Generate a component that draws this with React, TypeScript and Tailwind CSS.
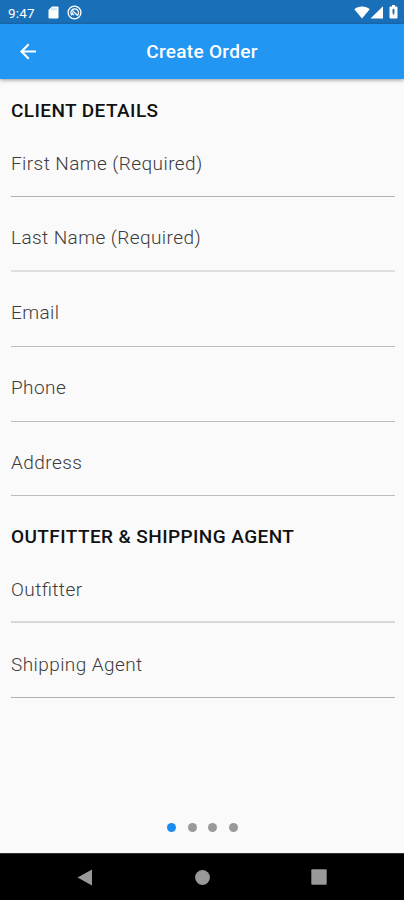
import clsx from "clsx";

interface Field {
  label: string;
  box: string;
  line: string;
}

const clientFields: Field[] = [
  { label: "First Name (Required)", box: "h-[75px] pt-[30px]", line: "border-b border-[#b2b2b2]" },
  { label: "Last Name (Required)", box: "h-[75px] pt-[29px]", line: "border-b-2 border-[#dfdfdf]" },
  { label: "Email", box: "h-[75px] pt-[29px]", line: "border-b border-[#bdbdbd]" },
  { label: "Phone", box: "h-[75px] pt-[29px]", line: "border-b border-[#bdbdbd]" },
  { label: "Address", box: "h-[74px] pt-[29px]", line: "border-b border-[#bdbdbd]" },
];

const agentFields: Field[] = [
  { label: "Outfitter", box: "h-[75px] pt-[30px]", line: "border-b-2 border-[#d8d8d8]" },
  { label: "Shipping Agent", box: "h-[75px] pt-[30px]", line: "border-b border-[#b2b2b2]" },
];

function StatusBar() {
  return (
    <div className="flex h-6 items-center justify-between bg-[#1a70b8] pr-[6px] pl-2 text-white">
      <div className="flex items-center pt-px">
        <span className="w-[40px] text-[13.5px] leading-[22px] tracking-[0.2px]">9:47</span>
        <svg width="11" height="13" viewBox="0 0 11 13" fill="currentColor">
          <path d="M4 0.5h5.5a1 1 0 0 1 1 1v10a1 1 0 0 1-1 1h-8a1 1 0 0 1-1-1V4z" />
          <path d="M4 2.2v2M6 2.2v2M8 2.2v2" stroke="#8dbbe0" strokeWidth="0.8" />
        </svg>
        <svg className="ml-2" width="15" height="15" viewBox="0 0 15 15" fill="none" stroke="currentColor">
          <circle cx="7.5" cy="7.5" r="6.4" strokeWidth="1.3" />
          <path d="M5 10.4a3.8 3.8 0 1 1 5.4 0M5.6 5.6l5.2 5.2M7.2 9.8a2 2 0 0 1-1.8-2.6" strokeWidth="1.3" />
        </svg>
      </div>
      <div className="flex items-center">
        <svg width="16" height="13" viewBox="0 0 16 13" fill="currentColor">
          <path d="M8 12.6L0.3 3.2C2.4 1.4 5 0.5 8 0.5s5.6.9 7.7 2.7z" />
        </svg>
        <svg width="14" height="13" viewBox="0 0 14 13" fill="currentColor">
          <path d="M13 0.3v12.2H0.5z" />
        </svg>
        <svg className="ml-[5px]" width="9" height="14" viewBox="0 0 9 14">
          <path d="M3 0h3v1.4h1.5a1 1 0 0 1 1 1v10.2a1 1 0 0 1-1 1h-6a1 1 0 0 1-1-1V2.4a1 1 0 0 1 1-1H3z" fill="currentColor" />
          <path d="M3.8 4.2h1.4v3.6l-0.7 2-0.7-2z" fill="#1a70b8" stroke="#1a70b8" strokeWidth="0.5" />
        </svg>
      </div>
    </div>
  );
}

function Header() {
  return (
    <header className="relative z-10 grid h-[55px] grid-cols-[1fr_auto_1fr] items-center bg-[#2196f3] pl-5 text-white shadow-[0_1px_4px_rgba(0,0,0,0.4)]">
      <svg width="17" height="17" viewBox="0 0 17 17" fill="none" stroke="currentColor" strokeWidth="2.2">
        <path d="M16 8.5H2M8.7 1.3L1.5 8.5l7.2 7.2" />
      </svg>
      <h1 className="-ml-5 pt-px text-[19px] leading-6 font-medium tracking-[0.3px]">Create Order</h1>
      <span />
    </header>
  );
}

function Section({ title, fields }: { title: string; fields: Field[] }) {
  return (
    <section>
      <h2 className="h-[23px] text-[19px] leading-6 font-medium tracking-[0.42px] whitespace-nowrap text-[#111]">{title}</h2>
      {fields.map((field) => (
        <div key={field.label} className={clsx(field.box, field.line)}>
          <div className="text-[19px] leading-6 font-light tracking-[0.42px] text-[#3c3c3c] [font-feature-settings:'liga']">
            {field.label}
          </div>
        </div>
      ))}
    </section>
  );
}

function Pager() {
  return (
    <div className="flex h-[9px] justify-center gap-[11.6px] pr-px">
      <span className="size-[9px] rounded-full bg-[#1c8df0]" />
      <span className="size-[9px] rounded-full bg-[#999]" />
      <span className="size-[9px] rounded-full bg-[#999]" />
      <span className="size-[9px] rounded-full bg-[#999]" />
    </div>
  );
}

function NavBar() {
  return (
    <nav className="flex h-[47px] items-center justify-between border-t border-[#333] bg-black px-[77px] text-[#999]">
      <svg width="16" height="17" viewBox="0 0 16 17" fill="currentColor">
        <path d="M15 0.5v16L0.5 8.5z" />
      </svg>
      <svg width="15" height="15" viewBox="0 0 15 15" fill="currentColor">
        <circle cx="7.5" cy="7.5" r="7.4" />
      </svg>
      <svg width="16" height="16" viewBox="0 0 16 16" fill="currentColor">
        <rect x="0.3" y="0.3" width="15.4" height="15.4" rx="1" />
      </svg>
    </nav>
  );
}

export default function App() {
  return (
    <div className="flex h-[900px] w-[404px] flex-col overflow-hidden bg-[#fafafa] font-[Roboto,sans-serif]">
      <StatusBar />
      <Header />
      <main className="flex flex-1 flex-col pt-5 pr-[9px] pl-[11px]">
        <div className="flex flex-col gap-[29px]">
          <Section title="CLIENT DETAILS" fields={clientFields} />
          <Section title="OUTFITTER & SHIPPING AGENT" fields={agentFields} />
        </div>
        <div className="mt-auto mb-[21px]">
          <Pager />
        </div>
      </main>
      <NavBar />
    </div>
  );
}
